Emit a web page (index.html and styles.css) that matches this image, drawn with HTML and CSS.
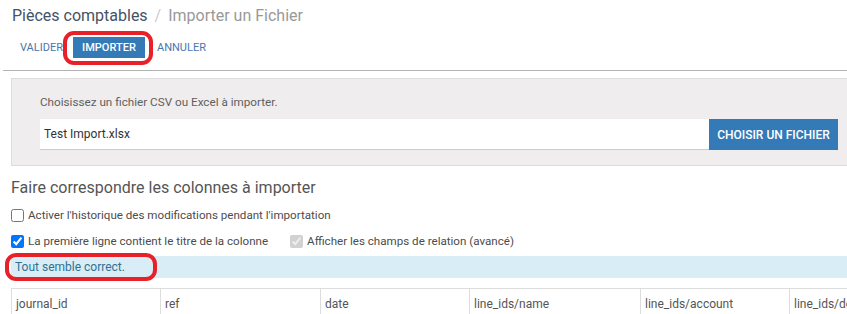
FILE: index.html
```html
<!DOCTYPE html>
<html lang="fr">

<head>
    <meta charset="UTF-8">
    <meta name="viewport" content="width=device-width, initial-scale=1.0">
    <title>Importer un Fichier</title>
    <link rel="stylesheet" href="styles.css">
</head>

<body>
    <div id="controlPanel">
        <h1 class="breadcrumb">
            <span class="crumb">Pièces comptables</span>
            <span class="sep">/</span>
            <span class="active">Importer un Fichier</span>
        </h1>
        <div class="buttons">
            <button class="btn-link">Valider</button>
            <button class="btn-primary">Importer</button>
            <button class="btn-link">Annuler</button>
        </div>
    </div>

    <div class="content">
        <div class="filePanel">
            <p class="hint">Choisissez un fichier CSV ou Excel à importer.</p>
            <div class="fileRow">
                <input type="text" class="fileName" value="Test Import.xlsx" readonly>
                <button class="btn-file">Choisir un fichier</button>
            </div>
        </div>

        <h2>Faire correspondre les colonnes à importer</h2>
        <div class="options">
            <label><input type="checkbox"> Activer l'historique des modifications pendant l'importation</label>
        </div>
        <div class="options">
            <label><input type="checkbox" checked> La première ligne contient le titre de la colonne</label>
            <label class="disabled"><input type="checkbox" checked disabled> Afficher les champs de relation (avancé)</label>
        </div>

        <div class="alert">Tout semble correct.</div>

        <div class="tableWrap">
            <table>
                <colgroup>
                    <col class="w149">
                    <col class="w160">
                    <col class="w149">
                    <col class="w171">
                    <col class="w149">
                    <col class="w149">
                </colgroup>
                <tr>
                    <td>journal_id</td>
                    <td>ref</td>
                    <td>date</td>
                    <td>line_ids/name</td>
                    <td>line_ids/account</td>
                    <td>line_ids/debit</td>
                </tr>
            </table>
        </div>
    </div>

    <div class="mark" id="markImport"></div>
    <div class="mark" id="markAlert"></div>
</body>

</html>
```

FILE: styles.css
```css
body {
    font-family: Roboto, "Liberation Sans", Arial, sans-serif;
    font-size: 12px;
    color: #4c4c4c;
    margin: 0;
    background: #fff;
    overflow: hidden;
}

#controlPanel {
    margin-left: 3px;
    padding: 5px 0 0 9px;
    height: 71px;
    box-sizing: border-box;
    border-bottom: 1px solid #b3b3b3;
}

.breadcrumb {
    font-size: 16px;
    font-weight: normal;
    margin: 0;
    height: 22px;
    line-height: 22px;
    color: #455265;
}

.breadcrumb .sep {
    color: #ccc;
    margin: 0 3px;
}

.breadcrumb .active {
    color: #999;
}

.buttons {
    display: flex;
    align-items: center;
    margin-top: 10px;
}

.buttons button {
    font-family: inherit;
    font-size: 11px;
    text-transform: uppercase;
    border: none;
    height: 21px;
    padding: 0 8px;
    cursor: pointer;
}

.btn-link {
    background: none;
    color: #4a76b0;
}

.buttons .btn-primary {
    background: #337ab7;
    color: #fff;
    font-weight: 500;
    width: 72px;
    padding: 0;
    margin: 0 4px 0 2px;
}

.content {
    padding-left: 11px;
}

.filePanel {
    margin-top: 7px;
    background: #efeded;
    border: 1px solid #dcdcdc;
    border-right: none;
    padding: 16px 9px 15px 28px;
}

.hint {
    margin: 0 0 9px;
    color: #5f5f5f;
    font-size: 11.7px;
    line-height: 15px;
}

.fileRow {
    display: flex;
}

.fileName {
    flex: 0 0 669px;
    height: 31px;
    box-sizing: border-box;
    border: none;
    border-bottom: 1px solid #ccc;
    padding: 0 4px;
    font-family: inherit;
    font-size: 12px;
    color: #333;
    background: #fff;
}

.btn-file {
    width: 130px;
    height: 31px;
    border: none;
    background: #337ab7;
    color: #fff;
    font-family: inherit;
    font-size: 12px;
    font-weight: 500;
    text-transform: uppercase;
    white-space: nowrap;
    padding: 0;
}

h2 {
    font-size: 16px;
    font-weight: normal;
    color: #555;
    margin: 12px 0 0;
    line-height: 20px;
}

.options {
    display: flex;
    gap: 22px;
    margin-top: 7px;
    line-height: 20px;
    font-size: 11.6px;
}

.options + .options {
    margin-top: 6px;
}

.options label {
    display: flex;
    align-items: center;
}

.options input {
    margin: 0 4px 0 0;
    width: 13px;
    height: 13px;
}

.alert {
    margin-top: 5px;
    background: #d9edf7;
    color: #31708f;
    height: 22px;
    line-height: 22px;
    padding-left: 4px;
}

.tableWrap {
    margin-top: 10px;
    overflow: hidden;
}

table {
    border-collapse: collapse;
    table-layout: fixed;
    width: 927px;
}

td {
    border: 1px solid #ddd;
    padding: 0 4px;
    height: 30px;
    color: #555;
    white-space: nowrap;
    overflow: hidden;
}

.w149 { width: 149px; }
.w160 { width: 160px; }
.w171 { width: 171px; }

.mark {
    position: absolute;
    border: 4px solid #e8202a;
    border-radius: 11px;
}

#markImport {
    left: 63px;
    top: 31px;
    width: 82px;
    height: 26px;
}

#markAlert {
    left: 5px;
    top: 253px;
    width: 144px;
    height: 20px;
}
```
